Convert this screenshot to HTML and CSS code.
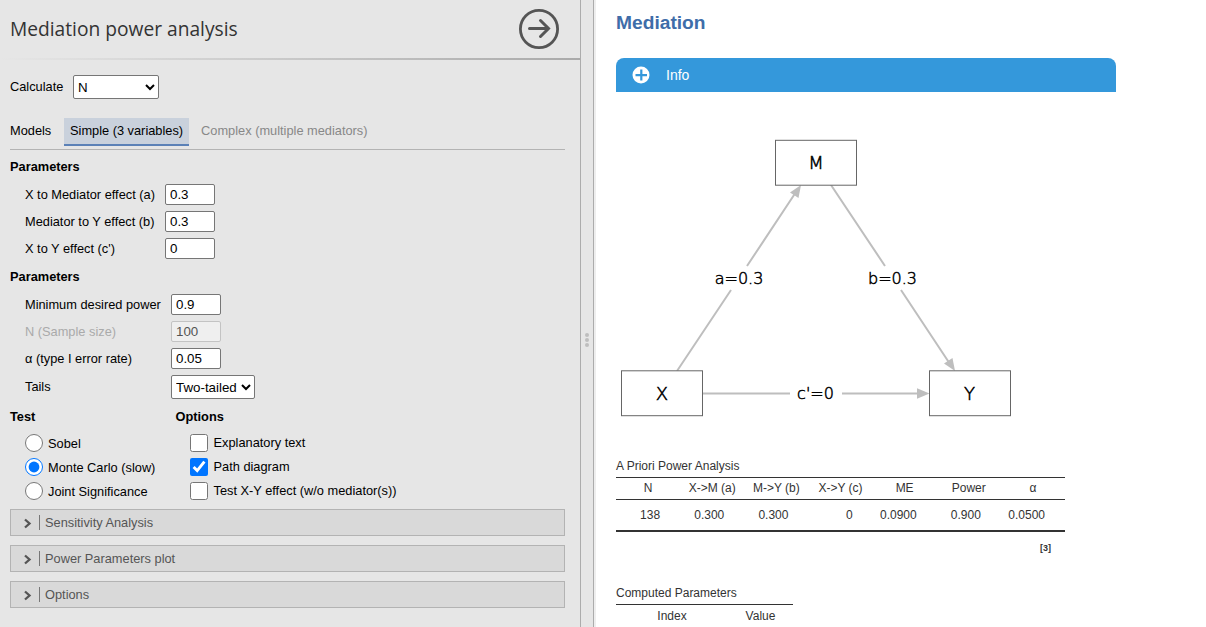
FILE: index.html
```html
<!DOCTYPE html>
<html lang="en">
<head>
<meta charset="utf-8">
<title>Mediation power analysis</title>
<link rel="stylesheet" href="styles.css">
</head>
<body>
<div class="app">
  <section class="options-panel">
    <header class="panel-header">
      <h1 class="panel-title">Mediation power analysis</h1>
      <svg class="go" width="40" height="40" viewBox="0 0 40 40" fill="none" stroke="#555">
        <circle cx="20" cy="20" r="18.6" stroke-width="2.8"/>
        <path d="M10.5 19.5H29M21.5 11.5L29.5 19.5L21.5 27.5" stroke-width="3" stroke-linecap="round" stroke-linejoin="miter"/>
      </svg>
    </header>
    <div class="header-rule"></div>
    <div class="panel-body">
      <div class="calculate"><label>Calculate</label><select class="calc-select"><option>N</option></select></div>
      <nav class="models"><span class="models-label">Models</span><span class="tab active">Simple (3 variables)</span><span class="tab">Complex (multiple mediators)</span></nav>
      <h2 class="group-title">Parameters</h2>
      <div class="fields effects">
        <label>X to Mediator effect (a)</label><input type="text" value="0.3">
        <label>Mediator to Y effect (b)</label><input type="text" value="0.3">
        <label>X to Y effect (c')</label><input type="text" value="0">
      </div>
      <h2 class="group-title">Parameters</h2>
      <div class="fields power">
        <label>Minimum desired power</label><input type="text" value="0.9">
        <label class="disabled">N (Sample size)</label><input type="text" value="100" disabled>
        <label>α (type I error rate)</label><input type="text" value="0.05">
        <label class="tails-label">Tails</label><select class="tails-select"><option>Two-tailed</option></select>
      </div>
      <div class="choices">
        <div>
          <h2 class="group-title">Test</h2>
          <div class="choice-list radios">
            <label><input type="radio" name="test"><span>Sobel</span></label>
            <label><input type="radio" name="test" checked><span>Monte Carlo (slow)</span></label>
            <label><input type="radio" name="test"><span>Joint Significance</span></label>
          </div>
        </div>
        <div>
          <h2 class="group-title options-title">Options</h2>
          <div class="choice-list checks">
            <label><input type="checkbox"><span>Explanatory text</span></label>
            <label><input type="checkbox" checked><span>Path diagram</span></label>
            <label><input type="checkbox"><span>Test X-Y effect (w/o mediator(s))</span></label>
          </div>
        </div>
      </div>
      <div class="collapses">
        <div class="collapse"><svg class="chevron" width="10" height="12" viewBox="0 0 10 12"><path d="M2 2.5L6.5 6.5L2 10.5" fill="none" stroke="#555" stroke-width="2.3"/></svg><span>Sensitivity Analysis</span></div>
        <div class="collapse"><svg class="chevron" width="10" height="12" viewBox="0 0 10 12"><path d="M2 2.5L6.5 6.5L2 10.5" fill="none" stroke="#555" stroke-width="2.3"/></svg><span>Power Parameters plot</span></div>
        <div class="collapse"><svg class="chevron" width="10" height="12" viewBox="0 0 10 12"><path d="M2 2.5L6.5 6.5L2 10.5" fill="none" stroke="#555" stroke-width="2.3"/></svg><span>Options</span></div>
      </div>
    </div>
  </section>
  <div class="splitter"><i></i><i></i><i></i></div>
  <main class="results">
    <h1 class="results-title">Mediation</h1>
    <div class="info">
      <svg width="18" height="18" viewBox="0 0 18 18"><circle cx="9" cy="9" r="8.5" fill="#fff"/><path d="M9.3 3.5V14.5M3.5 9.2H15" stroke="#3498db" stroke-width="2.2"/></svg>
      <span>Info</span>
    </div>
    <svg class="diagram" width="500" height="340" viewBox="616 110 500 340">
      <g stroke="#bebebe" stroke-width="2" fill="none">
        <path d="M677 371L731 290M747 266L796 192"/>
        <path d="M831 185L885 266M901 290L950 364"/>
        <path d="M703 393.5H790M842 393.5H918"/>
      </g>
      <g fill="#bebebe">
        <path d="M801 185L798.5 198L790 192.5Z"/>
        <path d="M955 371L952.5 358L944 363.5Z"/>
        <path d="M929.5 393.5L917 388.3V398.7Z"/>
      </g>
      <g fill="#fff" stroke="#666" stroke-width="1">
        <rect x="775.5" y="140.3" width="81" height="44.9"/>
        <rect x="621.5" y="370.8" width="81" height="44.9"/>
        <rect x="929.5" y="370.8" width="81" height="44.9"/>
      </g>
      <g class="node-text" text-anchor="middle">
        <text x="816" y="169">M</text>
        <text x="662" y="400">X</text>
        <text x="969.5" y="400">Y</text>
      </g>
      <g class="edge-text" text-anchor="middle">
        <text x="739" y="284">a=0.3</text>
        <text x="892.5" y="284">b=0.3</text>
        <text x="815.5" y="399">c'=0</text>
      </g>
    </svg>
    <table class="result-table power-table">
      <caption>A Priori Power Analysis</caption>
      <thead><tr><th>N</th><th>X-&gt;M (a)</th><th>M-&gt;Y (b)</th><th>X-&gt;Y (c)</th><th>ME</th><th>Power</th><th>α</th></tr></thead>
      <tbody><tr><td>138</td><td>0.300</td><td>0.300</td><td>0</td><td>0.0900</td><td>0.900</td><td>0.0500</td></tr></tbody>
    </table>
    <div class="reference">[3]</div>
    <table class="result-table computed-table">
      <caption>Computed Parameters</caption>
      <thead><tr><th class="index-col">Index</th><th>Value</th></tr></thead>
    </table>
  </main>
</div>
</body>
</html>
```
FILE: styles.css
```css
* { box-sizing: border-box; }
body {
  margin: 0;
  height: 627px;
  overflow: hidden;
  background: #fff;
  color: #000;
  font: 12.8px/15px "Liberation Sans", Arial, sans-serif;
}
h1, h2 { margin: 0; }
.app { display: flex; height: 627px; }
.options-panel { width: 580px; flex: none; background: #e6e6e6; }
.panel-header {
  height: 58px;
  padding: 0 21px 0 10px;
  display: flex;
  align-items: center;
  justify-content: space-between;
}
.panel-title { font: 400 19.2px/28px "Open Sans", sans-serif; color: #333; }
.header-rule { height: 2px; background: linear-gradient(to right, #e6e6e6, #aaa); }
.panel-body { padding: 15px 15px 0 10px; }
.calculate { display: flex; align-items: center; height: 24px; }
.calculate label { width: 63px; padding-bottom: 1px; }
select, input[type="text"] {
  margin: 0;
  border: 1px solid #767676;
  border-radius: 2px;
  background-color: #fff;
  color: #000;
  font: 13.33px "Liberation Sans", Arial, sans-serif;
}
select { height: 24px; padding: 0; }
.calc-select { width: 86px; }
.tails-select { width: 84px; }
input[type="text"] { width: 50px; height: 21px; padding: 1px 4px; }
input[type="text"]:disabled {
  border-color: #c3c3c3;
  background: #efefef;
  color: #545454;
}
.models {
  display: flex;
  margin-top: 19px;
  height: 32px;
  border-bottom: 1px solid #b3b3b3;
}
.models-label { width: 54px; padding-top: 5px; }
.tab { height: 28px; padding: 5px 6px 0; margin-right: 6px; color: #888; }
.tab.active { background: #c9d1dc; border-bottom: 2px solid #5b81b7; color: #000; }
.group-title { font-size: 12.8px; line-height: 15px; padding-top: 9px; height: 34px; }
.fields { display: grid; align-items: center; row-gap: 6px; padding-left: 15px; }
.effects { grid-template-columns: 140px max-content; margin-bottom: 1px; }
.power { grid-template-columns: 146px max-content; }
.disabled { color: #aaa; }
.tails-label { padding-bottom: 1px; }
.choices { display: grid; grid-template-columns: 165px auto; }
.choices .group-title { padding-top: 10px; height: 35px; }
.options-title { padding-left: 0.5px; }
.choice-list { display: grid; row-gap: 6px; padding-left: 15px; }
.choice-list label { display: flex; height: 18px; align-items: center; gap: 5px; }
.choice-list input { width: 18px; height: 18px; margin: 0; }
.radios span { padding-top: 1px; }
.checks span { padding-bottom: 1px; padding-left: 0.5px; }
.collapses { display: grid; row-gap: 9px; margin-top: 9px; }
.collapse {
  display: flex;
  align-items: center;
  height: 27px;
  padding-left: 12px;
  border: 1px solid #b3b3b3;
  background: #d9d9d9;
  color: #555;
}
.chevron { margin-top: 1px; }
.collapse span { margin-left: 6px; padding-left: 5px; border-left: 1px solid #777; }
.splitter {
  flex: none;
  width: 14px;
  padding-top: 52px;
  display: flex;
  flex-direction: column;
  align-items: center;
  justify-content: center;
  gap: 1px;
  background: #e6e6e6;
  border: solid #acacac;
  border-width: 0 1px;
}
.splitter i { width: 4px; height: 4px; border-radius: 50%; background: #bebebe; }
.results { flex: 1; padding: 11px 20px 0; border-left: 2px solid #eee; color: #333; }
.results-title { font-size: 19.2px; line-height: 23px; color: #3e6da9; }
.info {
  display: flex;
  align-items: center;
  gap: 16px;
  width: 500px;
  height: 34px;
  margin-top: 24px;
  padding-left: 16px;
  border-radius: 8px 8px 0 0;
  background: #3498db;
  color: #fff;
  font-size: 14px;
}
.diagram { display: block; margin-top: 18px; }
.node-text { font: 200 18px "DejaVu Sans", sans-serif; fill: #000; stroke: #000; stroke-width: 0.55px; }
.edge-text { font: 200 16px "DejaVu Sans", sans-serif; fill: #000; stroke: #000; stroke-width: 0.5px; }
.result-table {
  border-collapse: separate;
  border-spacing: 0;
  table-layout: fixed;
  font-size: 12px;
  line-height: 14px;
}
.result-table caption { height: 18px; text-align: left; white-space: nowrap; }
.result-table th {
  height: 22px;
  padding: 0;
  font-weight: 400;
  text-align: center;
  border-top: 1px solid #333;
}
.power-table { width: 449px; margin-top: 9px; }
.power-table th { height: 23px; padding-bottom: 1px; border-bottom: 1px solid #333; }
.power-table td { height: 32px; padding: 0 20px 0 0; text-align: right; border-bottom: 2px solid #333; }
.reference { width: 435px; margin-top: 10px; text-align: right; font-weight: 700; font-size: 9px; line-height: 12px; }
.computed-table { width: 177px; margin-top: 32px; }
.index-col { width: 112px; }
```
